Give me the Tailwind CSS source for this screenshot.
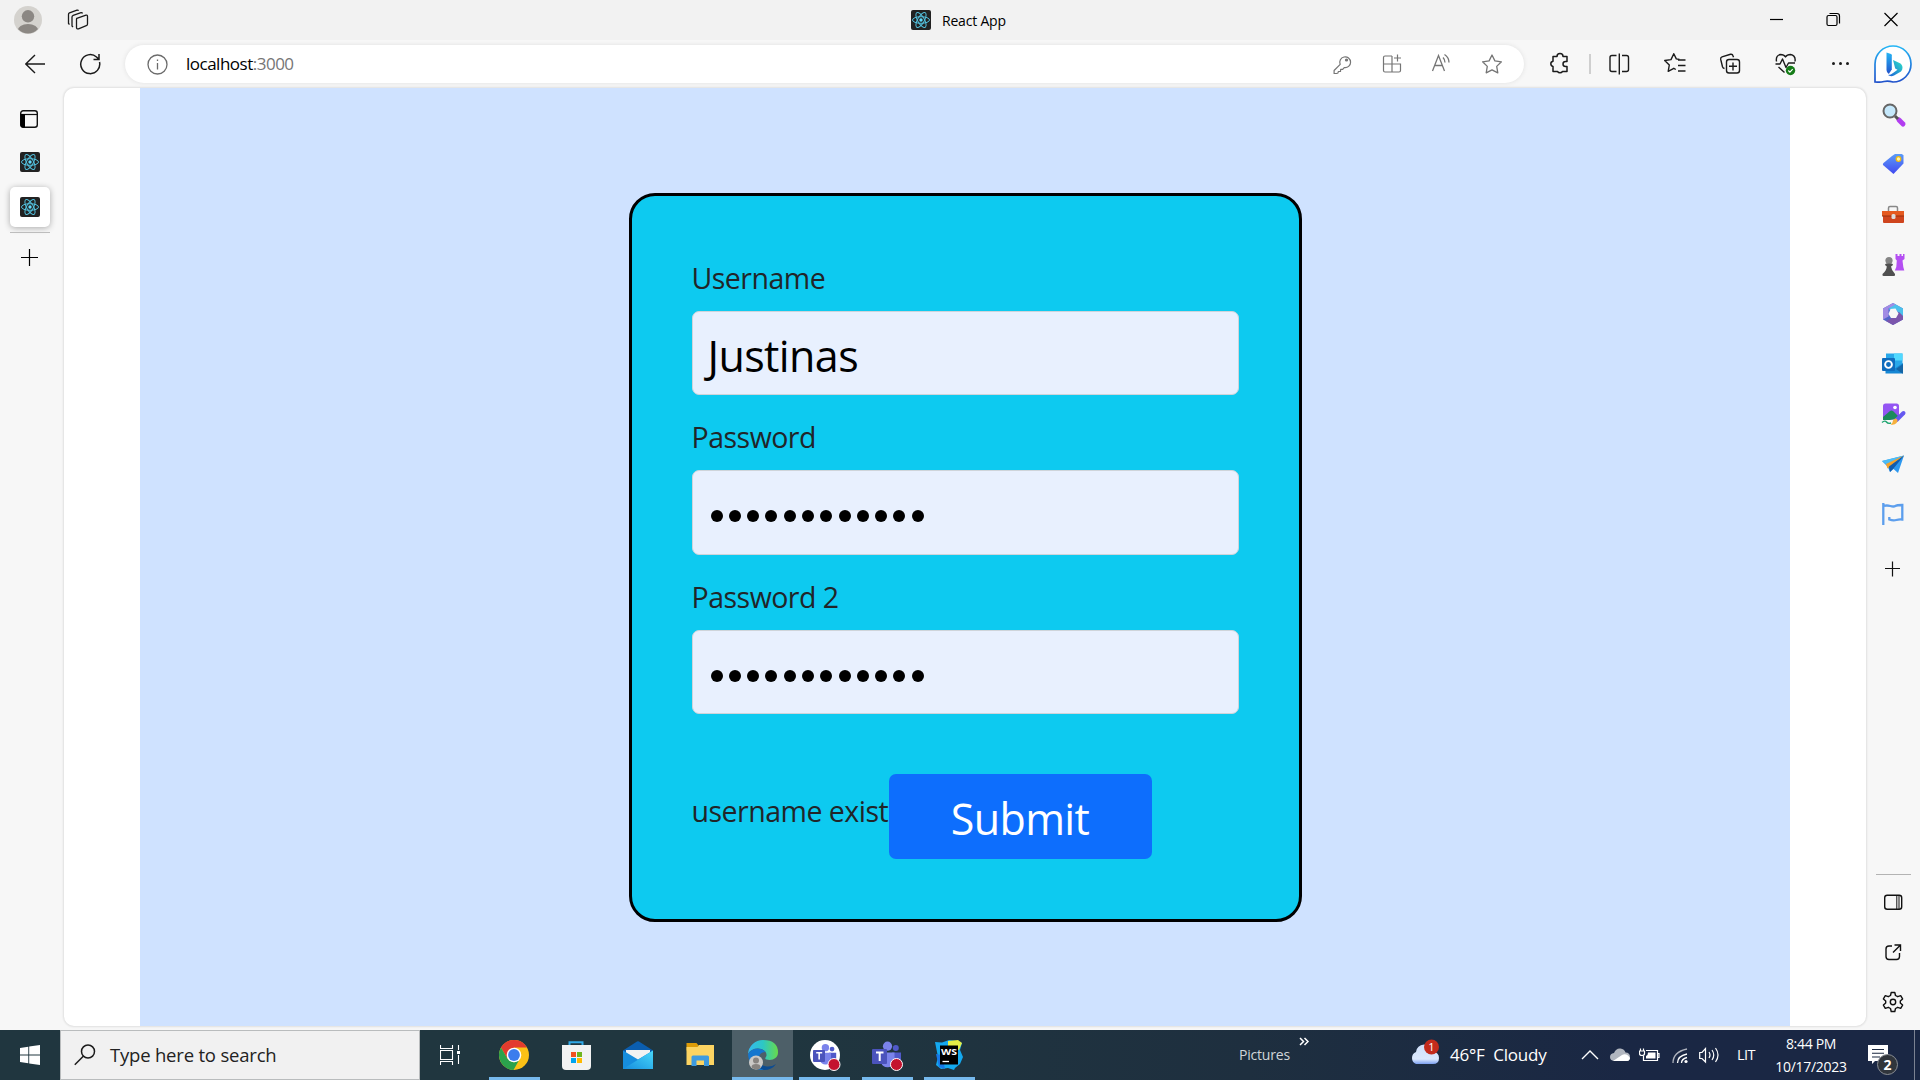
<!DOCTYPE html>
<html lang="en">
<head>
<meta charset="utf-8">
<title>React App</title>
<script src="https://cdn.jsdelivr.net/npm/@tailwindcss/browser@4"></script>
</head>
<body class="w-[1920px] h-[1080px] overflow-hidden flex flex-col bg-[#f7f7f7] font-['Open_Sans','Noto_Sans',sans-serif] text-black">
<svg class="hidden">
  <symbol id="react" viewBox="0 0 20 20">
    <rect width="20" height="20" rx="2" fill="#222"/>
    <g fill="none" stroke="#53c1de" stroke-width="1"><ellipse cx="10" cy="10" rx="8.5" ry="3.3"/><ellipse cx="10" cy="10" rx="8.5" ry="3.3" transform="rotate(60 10 10)"/><ellipse cx="10" cy="10" rx="8.5" ry="3.3" transform="rotate(120 10 10)"/></g>
    <circle cx="10" cy="10" r="1.7" fill="#61dafb"/>
  </symbol>
  <symbol id="teams" viewBox="0 0 30 30">
    <circle cx="23.800" cy="7" r="3" fill="#5059c9"/><circle cx="15.500" cy="5.200" r="4.600" fill="#7b83eb"/>
    <path d="M20 11.500h9v7.500a5 5 0 0 1-9 3z" fill="#5059c9"/><path d="M9 11.500h13.500v9a7 7 0 0 1-13.500 1z" fill="#7b83eb"/>
    <rect y="8" width="15" height="15" rx="1" fill="#4b53bc"/><path d="M4 11.500h7.500M7.700 11.500v8.500" stroke="#fff" stroke-width="2" fill="none"/>
  </symbol>
</svg>

<!-- title bar -->
<header class="h-10 shrink-0 bg-[#f2f2f2] flex items-center">
  <div class="w-14 flex justify-center"><svg width="28" height="28" viewBox="0 0 28 28"><defs><clipPath id="av"><circle cx="14" cy="14" r="13.500"/></clipPath></defs><circle cx="14" cy="14" r="14" fill="#d4d2ce"/><g fill="#8b8783" clip-path="url(#av)"><circle cx="14" cy="10.300" r="6.200"/><ellipse cx="14" cy="25" rx="10.500" ry="7"/></g></svg></div>
  <svg class="ml-[11px]" width="22" height="22" viewBox="0 0 22 22" fill="none" stroke="#1b1b1b" stroke-width="1.300" stroke-linejoin="round"><path d="M2.500 15.500 1.500 14.500V5.500q0-1.200 1-1.600L10 1.200q1.200-.3 1.500.6M6 18l-1-1V8q0-1.200 1.200-1.700L14 3.700q1.200-.2 1.500.8"/><path d="M9.800 9.300 19 6.200q1.500-.3 1.500 1.200v7.500q0 1.200-1.200 1.700l-7.800 3.200q-2 .6-2-1.300V10.500q0-.9.300-1.200z"/></svg>
  <div class="ml-[822px] flex items-center gap-[11px]"><svg width="20" height="20"><use href="#react"/></svg><span class="w-[700px] text-[14px] tracking-[-0.2px] leading-5 pt-px">React App</span></div>
  <div class="flex ml-auto h-10 items-center">
    <svg width="57" height="40" viewBox="0 0 57 40" stroke="#000" stroke-width="1.200"><path d="M22 19.500h13"/></svg>
    <svg width="57" height="40" viewBox="0 0 57 40" fill="none" stroke="#000" stroke-width="1.200"><rect x="22" y="15.500" width="10" height="10" rx="1.500"/><path d="M24.500 13.500h7.500q2.500 0 2.500 2.500v7.500"/></svg>
    <svg width="58" height="40" viewBox="0 0 58 40" stroke="#000" stroke-width="1.200"><path d="m22.500 13 13 13m0-13-13 13"/></svg>
  </div>
</header>

<!-- toolbar -->
<nav class="h-12 shrink-0 flex items-center">
  <div class="w-[70px] flex justify-center"><svg width="20" height="20" viewBox="0 0 20 20" fill="none" stroke="#1b1b1b" stroke-width="1.400"><path d="M20 10H.8M10 1 .8 10l9.200 9"/></svg></div>
  <div class="w-10 flex justify-center"><svg width="22" height="22" viewBox="0 0 22 22" fill="none" stroke="#1b1b1b" stroke-width="1.500"><path d="M20.500 9A9.500 9.500 0 1 1 17.500 4l2 1.900M20 1v5.500h-5.500"/></svg></div>
  <div class="ml-[15px] w-[1399px] h-[38px] rounded-full bg-white flex items-center pl-[22px] pr-[7px] shadow-[0_0_5px_#00000018]">
    <svg width="21" height="21" viewBox="0 0 21 21" fill="none" stroke="#6b6b6b" stroke-width="1.300"><circle cx="10.500" cy="10.500" r="9.500"/><path d="M10.500 9v6.500M10.500 5.500v1.500"/></svg>
    <span class="ml-[18px] text-[17px] tracking-[-0.5px]">localhost<span class="text-[#767676]">:3000</span></span>
    <div class="ml-auto flex" id="page-actions">
      <svg width="50" height="38" viewBox="0 0 50 38" fill="none" stroke="#757575" stroke-width="1.200" stroke-linejoin="round"><path d="M23.200 19.400a5.400 5.400 0 1 1 4 3.200l-1.500 1.700h-2l-.2 2.200h-2.200l-.3 1.500-1.400.5h-2.500v-3z"/><circle cx="29.500" cy="15" r="1" fill="#757575"/></svg>
      <svg width="50" height="38" viewBox="0 0 50 38" fill="none" stroke="#757575" stroke-width="1.200"><path d="M25 11h-7a1.500 1.500 0 0 0-1.500 1.500v13A1.500 1.500 0 0 0 18 27h14a1.500 1.500 0 0 0 1.500-1.500V19h-17M25 11v16M30.500 9.500v7M27 13h7"/></svg>
      <svg width="50" height="38" viewBox="0 0 50 38" fill="none" stroke="#757575" stroke-width="1.300"><path d="m15.500 26 6-15.500 6 15.500M17.800 20.500h7.500M26 12.500q2 2 2 5M27.500 9.500q4.500 3 4.500 8"/></svg>
      <svg width="50" height="38" viewBox="0 0 50 38" fill="none" stroke="#757575" stroke-width="1.300" stroke-linejoin="round"><path d="m25 10 2.900 5.900 6.500.9-4.700 4.600 1.100 6.400-5.800-3-5.800 3 1.100-6.400-4.700-4.600 6.500-.9z"/></svg>
    </div>
  </div>
  <svg class="ml-4" width="40" height="48" viewBox="0 0 40 48" fill="none" stroke="#1b1b1b" stroke-width="1.500" stroke-linejoin="round"><path d="M13 16.500h4a3 3 0 1 1 6 0h4v5h-1.500a2.500 2.500 0 0 0 0 5H27v5h-4.500a3 3 0 0 1-5 0H13v-5a2.700 2.700 0 0 1 0-5.300z"/></svg>
  <div class="w-5 flex justify-center"><div class="w-0.5 h-5 bg-[#cfcfcf]"></div></div>
  <svg width="38" height="48" viewBox="0 0 38 48" fill="none" stroke="#1b1b1b" stroke-width="1.400"><path d="M16.500 15.500H12a2 2 0 0 0-2 2v12a2 2 0 0 0 2 2h4.500M22 15.500h4.500a2 2 0 0 1 2 2v12a2 2 0 0 1-2 2H22M19.300 13.500v21"/></svg>
  <svg class="ml-[9px]" width="56" height="48" viewBox="0 0 56 48" fill="none" stroke="#1b1b1b" stroke-width="1.400" stroke-linejoin="round"><path d="m32.500 19.500-3.200-.6-2.500-5.200-2.800 5.900-6.300.9 4.600 4.500-1.100 6.300 5.600-3 2 1.200M31 20h7.500M31 25.500h7.500M31 31h7.500"/></svg>
  <svg width="55" height="48" viewBox="0 0 55 48" fill="none" stroke="#1b1b1b" stroke-width="1.400"><rect x="23.500" y="19.500" width="13" height="13.500" rx="2.500"/><path d="M30 22.500v8M26 26.300h8M21.500 28.500q-1.500-.3-2-1.800l-1.800-7.300q-.4-1.900 1.300-2.500l8.500-2.600q2-.4 2.500 1.500l.5 1.500"/></svg>
  <svg width="55" height="48" viewBox="0 0 55 48" fill="none" stroke="#1b1b1b" stroke-width="1.400" stroke-linejoin="round"><path d="M18.500 21.500q-1-6 4-7 3.500 0 5 2.500 1.500-2.500 5-2.500 5.500 1 4.500 7M17.500 24h4.500l2.500-5 3.500 8.500 2.500-4.500H37M20.500 27l6 5.500"/><circle cx="32.500" cy="30.500" r="4.700" fill="#157c18" stroke="none"/><path d="m30.300 30.500 1.600 1.600 2.800-3" stroke="#fff" stroke-width="1.200"/></svg>
  <svg width="55" height="48" viewBox="0 0 55 48" fill="#1b1b1b"><circle cx="20.500" cy="23.500" r="1.500"/><circle cx="27.500" cy="23.500" r="1.500"/><circle cx="34.500" cy="23.500" r="1.500"/></svg>
  <svg class="ml-[6px]" width="38" height="38" viewBox="0 0 38 38"><defs><linearGradient id="b1" x1="0" y1="0" x2="0" y2="1"><stop stop-color="#25b6f5"/><stop offset="1" stop-color="#2152cb"/></linearGradient><linearGradient id="b2" x1="1" y1="0" x2="0" y2="1"><stop stop-color="#2ee5c7"/><stop offset="1" stop-color="#1a5ed8"/></linearGradient></defs><path d="M1 37V19A18 18 0 1 1 19 37q-5-1.500-9-.5T1 37z" fill="#fff" stroke="url(#b1)" stroke-width="1.700"/><path d="M12.500 7.500 17 9q.8.300.8 1.300v14.200l-3 4.500q-2.300-1.200-2.300-4z" fill="url(#b1)"/><path d="M19 15l6.500 3q3 1.500 3 4.800 0 2-1.500 3.700L20 30.500q-3.500 1.500-6-.5 3-.2 5-2l4.500-3.200-2.300-1.300z" fill="url(#b2)"/></svg>
</nav>

<div class="h-[942px] shrink-0 flex">
  <!-- vertical tabs -->
  <aside class="w-16 shrink-0 flex flex-col pl-[10px]">
    <svg class="mt-[22px] ml-[10px]" width="18" height="18" viewBox="0 0 18 18"><rect x=".7" y=".7" width="16.600" height="16.600" rx="2.500" fill="none" stroke="#111" stroke-width="1.400"/><path d="M1 4.500h16" stroke="#111" stroke-width="1.200"/><path d="M.5 4h4.500v13.500H3A2.500 2.500 0 0 1 .5 15z" fill="#000"/></svg>
    <svg class="mt-6 ml-[10px]" width="20" height="20"><use href="#react"/></svg>
    <div class="mt-[15px] size-10 rounded-[5px] bg-white shadow-[0_1px_6px_#00000050] flex items-center justify-center"><svg width="20" height="20"><use href="#react"/></svg></div>
    <div class="mt-[5px] w-10 h-px bg-[#bdbdbd]"></div>
    <svg class="mt-4 ml-[11px]" width="18" height="18" viewBox="0 0 18 18" stroke="#000" stroke-width="1.200"><path d="M8.500 0v17M0 8.500h17"/></svg>
  </aside>

  <!-- page -->
  <main class="w-[1802px] h-[938px] rounded-[10px] bg-white overflow-hidden shadow-[0_0_2px_1px_#00000018] flex">
    <div class="ml-[76px] w-[1650px] h-full bg-[#cfe2ff] flex justify-center items-start pt-[105px]">
      <form class="w-[673px] h-[729px] rounded-[26px] border-3 border-black bg-[#0dcaf0] p-[60px] text-[28.5px] leading-[45px] tracking-[-0.5px] text-[#212529] flex flex-col">
        <label>Username</label>
        <div class="mt-[10px] h-[84px] shrink-0 rounded-[7px] border border-[#ced4da] bg-[#e8f0fe] px-[15px] flex items-center text-[43px] tracking-[-0.6px] text-black pt-1">Justinas</div>
        <label class="mt-5">Password</label>
        <div class="mt-[10px] h-[85px] shrink-0 rounded-[7px] border border-[#ced4da] bg-[#e8f0fe] px-[18px] pt-[7px] flex items-center gap-[6.300px]">
          <i class="size-3 rounded-full bg-black"></i><i class="size-3 rounded-full bg-black"></i><i class="size-3 rounded-full bg-black"></i><i class="size-3 rounded-full bg-black"></i><i class="size-3 rounded-full bg-black"></i><i class="size-3 rounded-full bg-black"></i><i class="size-3 rounded-full bg-black"></i><i class="size-3 rounded-full bg-black"></i><i class="size-3 rounded-full bg-black"></i><i class="size-3 rounded-full bg-black"></i><i class="size-3 rounded-full bg-black"></i><i class="size-3 rounded-full bg-black"></i>
        </div>
        <label class="mt-5">Password 2</label>
        <div class="mt-[10px] h-[84px] shrink-0 rounded-[7px] border border-[#ced4da] bg-[#e8f0fe] px-[18px] pt-[7px] flex items-center gap-[6.300px]">
          <i class="size-3 rounded-full bg-black"></i><i class="size-3 rounded-full bg-black"></i><i class="size-3 rounded-full bg-black"></i><i class="size-3 rounded-full bg-black"></i><i class="size-3 rounded-full bg-black"></i><i class="size-3 rounded-full bg-black"></i><i class="size-3 rounded-full bg-black"></i><i class="size-3 rounded-full bg-black"></i><i class="size-3 rounded-full bg-black"></i><i class="size-3 rounded-full bg-black"></i><i class="size-3 rounded-full bg-black"></i><i class="size-3 rounded-full bg-black"></i>
        </div>
        <div class="mt-[60px] flex h-[85px]">
          <span class="w-[197px] pt-[15px] whitespace-nowrap">username exist</span>
          <button type="button" class="w-[263px] h-[85px] rounded-[7px] bg-[#0d6efd] text-white text-[43px] tracking-[-0.6px] pt-1">Submit</button>
        </div>
      </form>
    </div>
  </main>

  <!-- right sidebar -->
  <aside class="w-[54px] flex flex-col items-center pt-px">
    <svg width="50" height="50" viewBox="0 0 50 50"><path d="m31 31 4 4" stroke="#b23df0" stroke-width="5" stroke-linecap="round"/><path d="m27 27 3 3" stroke="#555" stroke-width="3"/><circle cx="22" cy="22" r="6.500" fill="#c5e8fb" stroke="#666" stroke-width="2"/></svg>
    <svg width="50" height="50" viewBox="0 0 50 50"><defs><linearGradient id="tg" x1="0" y1="0" x2="0" y2="1"><stop stop-color="#5b9cf8"/><stop offset="1" stop-color="#4149f0"/></linearGradient></defs><path d="m24 17 3-2h7l1.500 1.500v8L25.500 35 15 26q-.5-1 .5-2z" fill="url(#tg)"/><circle cx="30.500" cy="20" r="2.300" fill="#fff4b0" stroke="#f1bd13" stroke-width="1.300"/></svg>
    <svg width="50" height="50" viewBox="0 0 50 50"><path d="M20.500 22v-3q0-1.500 1.500-1.500h6q1.500 0 1.500 1.500v3" fill="none" stroke="#888" stroke-width="1.500"/><rect x="15" y="24" width="21" height="10" rx="1" fill="#cf451e"/><path d="M14 22h22v5H14z" fill="#e55a20"/><path d="M14 27h22" stroke="#98300e"/><rect x="23.500" y="25" width="4" height="5" rx="1.500" fill="#ddd"/></svg>
    <svg width="50" height="50" viewBox="0 0 50 50"><path d="M27.500 15h2v2h2v-2h2v2h1.500v-2h1.500v5l-2 1.500.8 6.500 1 3.500h-9.500l1.500-3.500.5-6.500-1.300-1.500z" fill="#b44ff2"/><circle cx="21" cy="21.500" r="3.600" fill="#858585"/><path d="M17 26q0-1.500 1.500-1.500h5q1.500 0 1.500 1.500l-2 1.500q.5 4 4 7.500.5 2-1 2H15.500q-1.500 0-1-2 4-3.500 4.300-7.500z" fill="#505050"/></svg>
    <svg width="50" height="50" viewBox="0 0 50 50"><path d="m25 14 10 5.500v11L25 36l-10-5.500v-11z" fill="#5266c9"/><path d="m25 14 10 5.500v8l-6.500-6-8-1z" fill="#4cc0ec"/><path d="m25 14-10 5.500v11l5.500-3v-8l7-4z" fill="#a18be4"/><path d="M35 27v3.500L25 36l-7-4 8-4 5-5z" fill="#7b55ac"/><path d="m22.500 20 5-.5 3 5-2.500 4.500h-5L20.500 25z" fill="#f7f7f7"/></svg>
    <svg width="50" height="50" viewBox="0 0 50 50"><rect x="18" y="14.500" width="16.500" height="16" fill="#28a8ea"/><path d="M26 14.500h8.500v7H26z" fill="#50d9ff"/><path d="M17.500 24 26 30l9-6v10.500H17.500z" fill="#1687d4"/><path d="m35 25-7 5 7 5z" fill="#123b6d" opacity=".45"/><rect x="14" y="19" width="13" height="13" rx="1" fill="#0f6cbd"/><circle cx="20.500" cy="25.500" r="3.400" fill="none" stroke="#fff" stroke-width="1.900"/></svg>
    <svg width="50" height="50" viewBox="0 0 50 50"><rect x="15" y="14.500" width="16" height="16" rx="2.500" fill="#9455f3"/><path d="m15 28 7-6q1.500-1 3 0l5 5v2.500L22 31h-7z" fill="#1b8a5a"/><circle cx="27" cy="18.500" r="1.800" fill="#fff"/><path d="m35.500 24-7 7" stroke="#6558f0" stroke-width="4" stroke-linecap="round"/><path d="M29 30q1.500 2-.5 4-2 2.500-6 1.500 2.500-1.500 2.500-4 2-3 4-1.500z" fill="#f6b03c"/><path d="M14 33.500q3-2.500 4.500-.5t4.500 1" fill="none" stroke="#20a571" stroke-width="1.400"/></svg>
    <svg width="50" height="50" viewBox="0 0 50 50"><path d="M14 22 36 16.500 30 34l-4.500-4-3.500 3-2.500-5.500z" fill="#2d98ef"/><path d="M14 22 36 16.500l-17.500 9z" fill="#4dbdf7"/><path d="M36 16.500 18 25l1.500 4.500z" fill="#f7a229"/><path d="m22 33 3.500-3.500L36 16.500 21 27.500z" fill="#125cad"/></svg>
    <svg width="50" height="50" viewBox="0 0 50 50" fill="none" stroke="#5c9eed" stroke-width="2.300"><path d="M15.300 14v22M15.300 17q3.500-1 7 0t5 0 7-1v14.500q-3-.5-6 .5t-7-.5v-2.500"/></svg>
    <svg class="mt-[5px]" width="50" height="50" viewBox="0 0 50 50" stroke="#111" stroke-width="1.200"><path d="M24.500 17.500v15M17 24.500h15"/></svg>
    <div class="mt-auto w-[35px] h-px bg-[#b3b3b3]"></div>
    <div class="mb-[3px] mt-[2px] flex flex-col">
    <svg width="50" height="50" viewBox="0 0 50 50" fill="none" stroke="#111" stroke-width="1.400"><rect x="16.700" y="18.200" width="17" height="14" rx="2.500"/><path d="M28.800 18.500v14M31 18.500v14" stroke-width="1"/></svg>
    <svg width="50" height="50" viewBox="0 0 50 50" fill="none" stroke="#111" stroke-width="1.400"><path d="M24 19h-3a3 3 0 0 0-3 3v7.500a3 3 0 0 0 3 3h7.500a3 3 0 0 0 3-3V26M26.500 18h6v6M32.500 18l-7.500 7.500"/></svg>
    <svg width="50" height="50" viewBox="0 0 50 50" fill="none" stroke="#111" stroke-width="1.400" stroke-linejoin="round"><path d="m23.200 15.500 3.600 0 .7 3 2.200 1.200 3-1 1.900 3.200-2.300 2.200v1.800l2.300 2.200-1.900 3.200-3-1-2.200 1.200-.7 3h-3.600l-.7-3-2.200-1.200-3 1-1.900-3.200 2.300-2.200v-1.800l-2.300-2.200 1.900-3.200 3 1 2.200-1.200z"/><circle cx="25" cy="25" r="2.700"/></svg>
    </div>
  </aside>
</div>

<!-- taskbar -->
<footer class="h-[50px] shrink-0 flex items-stretch text-white bg-linear-to-r from-[#20363f] from-40% via-[#1e2f3f] via-65% to-[#1a2744] to-85%">
  <div class="w-[60px] flex items-center justify-center"><svg width="20" height="20" viewBox="0 0 20 20" fill="#fff"><path d="M0 3 8.300 1.700v7.800H0zM9.200 1.500 20 0v9.500H9.200zM0 10.500h8.300v7.800L0 17zM9.200 10.500H20V20L9.200 18.400z"/></svg></div>
  <div class="w-[360px] bg-[#f1f1f1] border border-[#b9bcbd] flex items-center text-[#222]">
    <svg class="ml-[13px]" width="22" height="22" viewBox="0 0 22 22" fill="none" stroke="#1b1b1b" stroke-width="1.500"><circle cx="14" cy="7.500" r="6.500"/><path d="M9.500 12 .8 20.700"/></svg>
    <span class="ml-[14px] text-[18.500px] tracking-[-0.200px] whitespace-nowrap">Type here to search</span>
  </div>
  <div class="w-[63px] flex items-center pl-5"><svg width="21" height="20" viewBox="0 0 21 20" fill="none" stroke="#fff" stroke-width="1.100"><path d="M.5 0v3.500h12V0M.5 20v-3.500h12V20M.5 5.500h12v9H.5zM18.500 0v5M18.500 10v9"/><path d="M17 6h3v3h-3z" fill="#fff" stroke="none"/></svg></div>
  <div class="w-[62px] flex items-center flex-col pt-[10px] justify-between"><svg width="30" height="30" viewBox="0 0 30 30"><circle cx="15" cy="15" r="15" fill="#fbc116"/><path d="M15 15 8.500 18.700 2 7.500A15 15 0 0 1 28 7.500H15z" fill="#e33b2e"/><path d="M2 7.500A15 15 0 0 0 14.500 30L21 18.500 15 22.500 8.500 18.700z" fill="#2ba24c"/><circle cx="15" cy="15" r="7.300" fill="#fff"/><circle cx="15" cy="15" r="5.900" fill="#3b7ded"/></svg><div class="w-[51px] h-[3px] bg-[#76b9ed]"></div></div>
  <div class="w-[62px] flex justify-center pt-[10px]"><svg width="30" height="30" viewBox="0 0 30 30"><path d="M8.500 6V2.200h13V6" fill="none" stroke="#31a9e8" stroke-width="2"/><path d="M1 5h29v21q0 4-4 4H5q-4 0-4-4z" fill="#f2f2f2"/><path d="M10 12h5v5h-5z" fill="#f25022"/><path d="M16 12h5v5h-5z" fill="#6fb51f"/><path d="M10 18h5v5h-5z" fill="#00a4ef"/><path d="M16 18h5v5h-5z" fill="#ffb900"/></svg></div>
  <div class="w-[62px] flex justify-center pt-[10px]"><svg width="30" height="30" viewBox="0 0 30 30"><defs><linearGradient id="ml" x1="0" y1="1" x2="1" y2="0"><stop stop-color="#168ddd"/><stop offset="1" stop-color="#48d8fa"/></linearGradient></defs><path d="M0 10.500 14 1.500q1-.6 2 0l14 9V15H0z" fill="#0b5eaf"/><path d="M3 10h24v10H3z" fill="#f2f2f2"/><path d="M0 10.500 15 19.500l15-9V29H0z" fill="#168ddd"/><path d="M0 29 30 10.500V29z" fill="url(#ml)"/></svg></div>
  <div class="w-[62px] flex justify-center pt-[10px]"><svg width="30" height="30" viewBox="0 0 30 30"><path d="M1.500 3h10l2 2.500v5h-12z" fill="#dd9c08"/><path d="M14 5h15v20H1.500V7h11z" fill="#fcd462"/><path d="M6.500 26V17q0-1.500 1.500-1.500h14.500q1.500 0 1.500 1.500v9h-5v-5.500h-7.500V26z" fill="#3e9bdf"/></svg></div>
  <div class="w-[61px] ml-px flex flex-col items-center justify-between pt-[10px] bg-[#4d5f68]"><svg width="30" height="30" viewBox="0 0 30 30"><defs><linearGradient id="e1"><stop stop-color="#35b9f1"/><stop offset=".5" stop-color="#2dc7c4"/><stop offset="1" stop-color="#68da4a"/></linearGradient></defs><path d="M0 14A15 15 0 0 1 15 0q15 0 15 12.500c0 6-6 8.500-11.500 7-2.500-.8-.5-2 0-4 .5-4-4-7-8.500-7Q3 8.500 0 14z" fill="url(#e1)"/><path d="M0 14.500Q2.500 9 9.500 8.500q5 0 8 3.500-6 0-6.500 6-.3 8 7 12-16 1.500-18-15.500z" fill="#1476cf"/><path d="M10.500 18q0 7.500 8.500 8.500 5 .3 9-2.500-4 6-12 6-7-2-6.500-9z" fill="#0c4c92"/><circle cx="8" cy="22.500" r="7" fill="#cbc9c7"/><circle cx="8" cy="20.500" r="3" fill="#878380"/><path d="M3.500 27q0-3 4.500-3t4.500 3-4.500 2.300T3.500 27z" fill="#878380"/></svg><div class="w-full h-[3px] bg-[#76b9ed]"></div></div>
  <div class="w-[63px] flex flex-col items-center justify-between pt-[10px]"><svg width="32" height="31" viewBox="-1 0 32 31"><circle cx="15" cy="15" r="15" fill="#fff"/><svg x="3" y="3.500" width="24" height="24"><use href="#teams"/></svg><circle cx="24" cy="24.500" r="6" fill="#c4122f" stroke="#fff" stroke-width="1"/></svg><div class="w-[51px] h-[3px] bg-[#76b9ed]"></div></div>
  <div class="w-[62px] flex flex-col items-center justify-between pt-[10px]"><svg width="32" height="31" viewBox="-1 0 32 31"><svg y="1" width="30" height="30"><use href="#teams"/></svg><circle cx="24.500" cy="24.500" r="6" fill="#c4122f" stroke="#fff" stroke-width="1"/></svg><div class="w-[51px] h-[3px] bg-[#76b9ed]"></div></div>
  <div class="w-[62px] flex flex-col items-center justify-between pt-[10px]"><svg width="30" height="30" viewBox="0 0 30 30"><path d="m1 2 7 .5 7-2.500 7 1 6 2-2 7 3 7-3 7-5 4-1 2-6-2-7 1L2 25l2-8z" fill="#14a9f0"/><path d="m14 1 10-1 4 3-3 7-11-4z" fill="#e6ee45"/><path d="m2 14 3 13 6 2-3-14z" fill="#1778e8"/><rect x="6" y="5.500" width="18" height="19" fill="#000"/><text x="7" y="15" font-size="9" font-weight="700" fill="#fff" textLength="16" lengthAdjust="spacingAndGlyphs">WS</text><path d="M8.500 21.500H15" stroke="#fff" stroke-width="1.300"/></svg><div class="w-[51px] h-[3px] bg-[#76b9ed]"></div></div>

  <span class="ml-[259px] w-[52px] text-[14px] leading-5 tracking-[-0.200px] pt-[15px] text-[#d0d5d9]">Pictures</span>
  <svg class="ml-[8px]" width="11" height="50" viewBox="0 0 11 50" fill="none" stroke="#fff" stroke-width="1.500"><path d="m1 8 3.500 3.500L1 15M5.500 8 9 11.500 5.500 15"/></svg>
  <svg class="ml-[99px]" width="32" height="50" viewBox="0 0 32 50"><defs><linearGradient id="cl" x1="0" y1="0" x2="0" y2="1"><stop stop-color="#cfe0fa"/><stop offset=".75" stop-color="#dbe8fd"/><stop offset="1" stop-color="#7b9ff0"/></linearGradient></defs><path d="M7 34a6.500 6.500 0 0 1 0-12Q8 15 15 14.500q7 0 9 7 6 1 6 6.500 0 6-6 6z" fill="url(#cl)"/><circle cx="22.500" cy="17" r="7.500" fill="#c42b1c"/><text x="22.500" y="21" font-size="11" fill="#fff" text-anchor="middle">1</text></svg>
  <span class="ml-[9px] w-[106px] text-[17px] leading-6 pt-[13px] whitespace-pre tracking-[-0.200px]">46°F  Cloudy</span>
  <svg class="ml-[24px]" width="20" height="50" viewBox="0 0 20 50" fill="none" stroke="#fff" stroke-width="1.400"><path d="m2 29 8-8 8 8"/></svg>
  <svg class="ml-[9px]" width="22" height="50" viewBox="0 0 22 50"><path d="M5 31q-4-.5-4-4t4-4q2-5 6.500-4.500 4 .5 5 4 4.500 0 4.500 4.500T17 31z" fill="#b1b6bf"/><path d="m4 31 9-6q3-1.500 6 .5 2.500 2 1.500 4T17 31z" fill="#fff"/></svg>
  <svg class="ml-[8px]" width="22" height="50" viewBox="0 0 22 50" fill="none" stroke="#fff" stroke-width="1.200"><path d="M7 20.500h11.500v10h-14V26M18.500 23.500h1.500v4h-1.500M.5 21h5v2.500q0 2-2.500 2t-2.500-2zM1.500 21v-2.500M4.500 21v-2.500"/><path d="M9 22.500h7.500v6H7v-2.500q2-.5 2-3.500z" fill="#fff" stroke="none"/></svg>
  <svg class="ml-[11px]" width="18" height="50" viewBox="0 0 18 50" fill="none" stroke="#fff" stroke-width="1.300"><path d="M9.500 33q0-4 5.500-5.500M5.500 33q0-7 9.500-9" /><path d="M1 33Q1 22 15 19" opacity=".65"/><circle cx="14" cy="31.500" r="1.600" fill="#fff" stroke="none"/></svg>
  <svg class="ml-[9px]" width="22" height="50" viewBox="0 0 22 50" fill="none" stroke="#fff" stroke-width="1.200"><path d="M.7 22.500H3l3.500-4v13.500L3 28.500H.7zM10 22q2 3 0 6M13 20q3.500 5 0 10M16.500 18q5 7 0 14"/></svg>
  <span class="ml-[16px] w-[22px] text-[14.500px] leading-5 tracking-[-0.600px] pt-[15px]">LIT</span>
  <div class="ml-[4px] w-[96px] text-[14px] leading-[23px] pt-[2px] text-center tracking-[-0.300px] whitespace-nowrap"><div>8:44 PM</div><div>10/17/2023</div></div>
  <svg class="ml-[8px]" width="32" height="50" viewBox="0 0 32 50"><path d="M1 15h20v16H8l-3 3v-3H1z" fill="#fff"/><path d="M5 19.500h12M5 23.200h12M5 27h8" stroke="#1b2840" stroke-width="1.100"/><circle cx="20.500" cy="34.500" r="10" fill="#30353c" stroke="#8a8e94" stroke-width="1"/><text x="20.500" y="39.500" font-size="14" font-weight="700" fill="#fff" text-anchor="middle">2</text></svg>
  <div class="ml-auto w-[6px] border-l border-[#7b8291]"></div>
</footer>
</body>
</html>
